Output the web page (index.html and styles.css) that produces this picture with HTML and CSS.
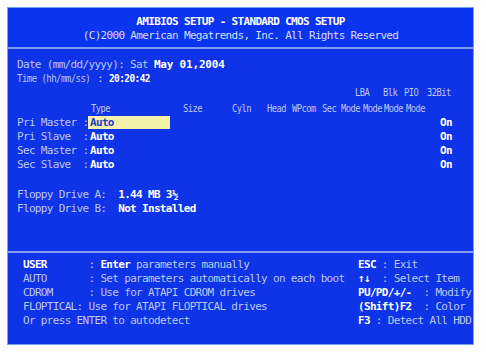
FILE: index.html
```html
<!DOCTYPE html>
<html lang="en">
<head>
    <meta charset="UTF-8">
    <meta name="viewport" content="width=device-width, initial-scale=1.0">
    <title>AMIBIOS Setup - Standard CMOS Setup</title>
    <link rel="stylesheet" href="styles.css">
</head>
<body>

    <div class="screen">

        <!-- Заголовок -->
        <div class="title">
            <div class="title-main">AMIBIOS SETUP - STANDARD CMOS SETUP</div>
            <div class="title-sub">(C)2000 American Megatrends, Inc. All Rights Reserved</div>
        </div>

        <!-- Основні параметри -->
        <div class="setup">
            <div class="line">Date (mm/dd/yyyy): Sat <b class="wide">May 01,2004</b></div>
            <div class="line"><span class="time-label"><span class="narrow">Time (hh/mm/ss)</span></span>: <b class="narrow">20:20:42</b></div>

            <div class="modes-top">
                <span>LBA</span><span>Blk</span><span>PIO</span><span>32Bit</span>
            </div>
            <div class="drive-head">
                <span></span><span>Type</span><span>Size</span><span>Cyln</span><span>Head</span><span>WPcom</span><span>Sec</span><span>Mode</span><span>Mode</span><span>Mode</span><span>Mode</span>
            </div>

            <div class="drive">
                <span>Pri Master :</span><span><b class="selected">Auto</b></span><b>On</b>
            </div>
            <div class="drive">
                <span>Pri Slave  :</span><b>Auto</b><b>On</b>
            </div>
            <div class="drive">
                <span>Sec Master :</span><b>Auto</b><b>On</b>
            </div>
            <div class="drive">
                <span>Sec Slave  :</span><b>Auto</b><b>On</b>
            </div>

            <div class="line floppy">Floppy Drive A:  <b>1.44 MB 3½</b></div>
            <div class="line">Floppy Drive B:  <b>Not Installed</b></div>
        </div>

        <!-- Підказки -->
        <div class="help">
            <div class="help-left">
                <div class="line"><b>USER</b>       : <b>Enter</b> parameters manually</div>
                <div class="line">AUTO       : Set parameters automatically on each boot</div>
                <div class="line">CDROM      : Use for ATAPI CDROM drives</div>
                <div class="line">FLOPTICAL: Use for ATAPI FLOPTICAL drives</div>
                <div class="line">Or press ENTER to autodetect</div>
            </div>
            <div class="help-right">
                <div class="line"><b>ESC</b> : Exit</div>
                <div class="line"><b>↑↓</b>  : Select Item</div>
                <div class="line"><b>PU/PD/+/-</b>  : Modify</div>
                <div class="line"><b>(Shift)F2</b>  : Color</div>
                <div class="line"><b>F3</b> : Detect All HDD</div>
            </div>
        </div>

    </div>

</body>
</html>
```

FILE: styles.css
```css
/* Сторінка */
body {
    margin: 0;
    background-color: #fff;
}

/* Екран BIOS */
.screen {
    margin: 7px 0 0 7px;
    width: 465px;
    height: 336px;
    border: 1px solid #7d9cf2;
    background-color: #0f33e6;
    display: flex;
    flex-direction: column;
    font-family: "DejaVu Sans Mono", "Liberation Mono", monospace;
    font-size: 11px;
    letter-spacing: -0.67px;
    color: #bcc8f2;
}

    .screen b {
        color: #fff;
        font-weight: bold;
    }

    .screen .line {
        white-space: pre;
    }

    /* Вужчі символи, як у шрифті BIOS */
    .screen .narrow {
        display: inline-block;
        transform: scaleX(0.82);
        transform-origin: left center;
    }

/* Заголовок */
.title {
    height: 41px;
    padding-top: 7px;
    box-sizing: border-box;
    border-bottom: 2px solid #7d9cf2;
    background-color: #0b34ee;
    text-align: center;
    line-height: 14px;
}

    .title-main {
        color: #fff;
        font-weight: bold;
    }

    .title-sub {
        color: #d6defb;
    }

/* Основні параметри */
.setup {
    flex: 1;
    padding: 9px 0 0 9px;
    line-height: 14px;
}

    .setup .wide {
        letter-spacing: -0.2px;
    }

    .setup .time-label {
        display: inline-block;
        width: 80px;
    }

    .setup b.narrow {
        transform: scaleX(0.86);
    }

/* Таблиця дисків */
.modes-top,
.drive-head,
.drive {
    display: grid;
    white-space: pre;
}

    .modes-top span,
    .drive-head span {
        transform: scaleX(0.8);
        transform-origin: left center;
    }

.modes-top {
    grid-template-columns: 28px 21px 23px auto;
    padding-left: 338px;
}

.drive-head {
    margin-top: 2px;
    grid-template-columns: 74px 92px 49px 35px 25px 30px 19px 22px 21px 22px auto;
}

.drive {
    grid-template-columns: 73px 350px auto;
}

    .drive .selected {
        display: block;
        width: 80px;
        height: 13px;
        line-height: 13px;
        margin: 0 0 0 -2px;
        padding-left: 2px;
        background-color: #f3f1a8;
        color: #2140c8;
    }

.floppy {
    margin-top: 16px;
}

/* Підказки */
.help {
    height: 93px;
    box-sizing: border-box;
    border-top: 2px solid #7d9cf2;
    padding: 5px 0 0 15px;
    display: flex;
    line-height: 14px;
}

    .help-left {
        width: 335px;
    }
```
